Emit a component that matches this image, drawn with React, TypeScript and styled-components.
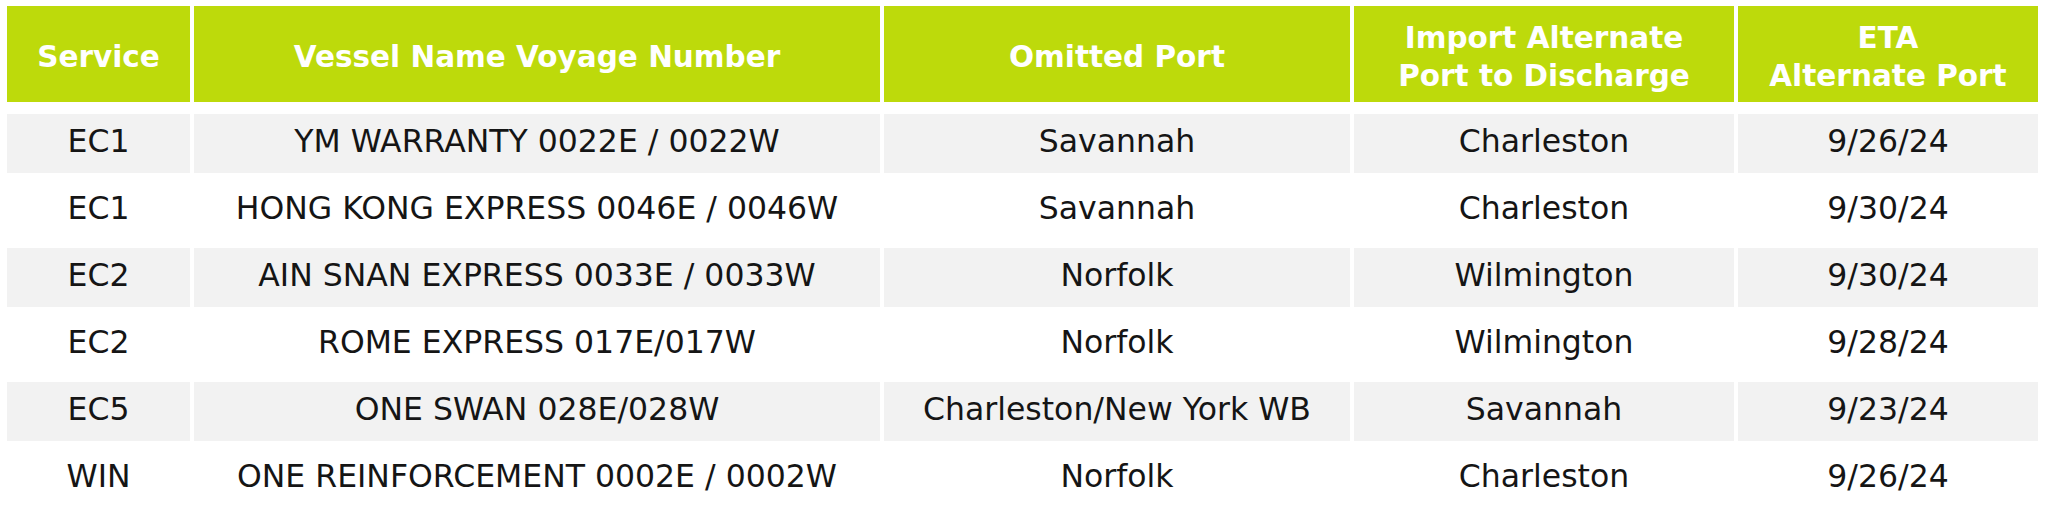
import React from "react";
import styled, { createGlobalStyle } from "styled-components";

const Global = createGlobalStyle`
  html, body { margin: 0; padding: 0; background: #ffffff; }
  body { font-family: "DejaVu Sans", "Liberation Sans", sans-serif; }
`;

const Page = styled.div`
  padding: 6px 10px 0 7px;
`;

const Table = styled.div`
  display: flex;
  flex-direction: column;
  gap: 8px;
  width: 2031px;
`;

const Row = styled.div`
  display: grid;
  grid-template-columns: 183px 686px 466px 380px 300px;
  column-gap: 4px;
`;

const HeadRow = styled(Row)`
  margin-bottom: 4px;
`;

const HeadCell = styled.div`
  box-sizing: border-box;
  background: #bdda0b;
  color: #ffffff;
  font-weight: 700;
  font-size: 29.5px;
  line-height: 38px;
  height: 96px;
  padding-top: 6px;
  display: flex;
  align-items: center;
  justify-content: center;
  text-align: center;
`;

const Cell = styled.div<{ $shaded: boolean }>`
  box-sizing: border-box;
  background: ${(p) => (p.$shaded ? "#f2f2f2" : "#ffffff")};
  color: #151515;
  font-size: 31.5px;
  height: 59px;
  padding-bottom: 5px;
  display: flex;
  align-items: center;
  justify-content: center;
  text-align: center;
  white-space: nowrap;
`;

const headers: React.ReactNode[] = [
  "Service",
  "Vessel Name Voyage Number",
  "Omitted Port",
  <>Import Alternate<br />Port to Discharge</>,
  <>ETA<br />Alternate Port</>,
];

const rows: string[][] = [
  ["EC1", "YM WARRANTY 0022E / 0022W", "Savannah", "Charleston", "9/26/24"],
  ["EC1", "HONG KONG EXPRESS 0046E / 0046W", "Savannah", "Charleston", "9/30/24"],
  ["EC2", "AIN SNAN EXPRESS 0033E / 0033W", "Norfolk", "Wilmington", "9/30/24"],
  ["EC2", "ROME EXPRESS 017E/017W", "Norfolk", "Wilmington", "9/28/24"],
  ["EC5", "ONE SWAN 028E/028W", "Charleston/New York WB", "Savannah", "9/23/24"],
  ["WIN", "ONE REINFORCEMENT 0002E / 0002W", "Norfolk", "Charleston", "9/26/24"],
];

export default function App() {
  return (
    <>
      <Global />
      <Page>
        <Table>
          <HeadRow>
            {headers.map((h, i) => (
              <HeadCell key={i}>{h}</HeadCell>
            ))}
          </HeadRow>
          {rows.map((r, ri) => (
            <Row key={ri}>
              {r.map((c, ci) => (
                <Cell key={ci} $shaded={ri % 2 === 0}>
                  {c}
                </Cell>
              ))}
            </Row>
          ))}
        </Table>
      </Page>
    </>
  );
}
